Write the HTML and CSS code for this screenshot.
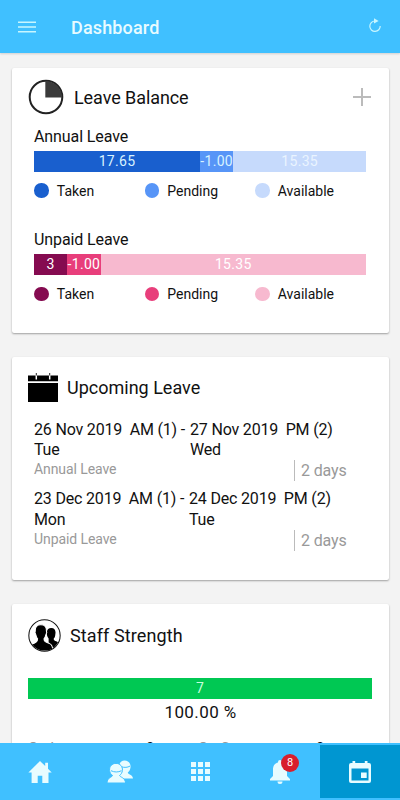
FILE: index.html
```html
<!DOCTYPE html>
<html lang="en">
<head>
<meta charset="utf-8">
<title>Dashboard</title>
<link rel="stylesheet" href="styles.css">
</head>
<body>
<header class="topbar">
  <svg class="menu" viewBox="0 0 18 12"><path d="M0 1.2h18M0 6h18M0 10.8h18"/></svg>
  <h1>Dashboard</h1>
  <svg class="refresh" viewBox="0 0 14 15"><path class="arc" d="M7 3A5.200 5.200 0 1 0 12.200 8"/><path class="tip" d="M6 .2 10.600 3 6 5.600z"/></svg>
</header>
<main>
  <section class="card balance">
    <div class="head">
      <svg class="pie" viewBox="0 0 36 36"><circle cx="18" cy="18" r="16.300"/><path d="M17.300 2v16.600H34A16.300 16.300 0 0 0 17.300 2z"/></svg>
      <h2>Leave Balance</h2>
      <svg class="plus" viewBox="0 0 18 18"><path d="M9 0v18M0 9h18"/></svg>
    </div>
    <div class="group annual">
      <h3>Annual Leave</h3>
      <div class="bar"><span class="c1">17.65</span><span class="c2">-1.00</span><span class="c3">15.35</span></div>
      <ul><li><i class="c1"></i>Taken</li><li><i class="c2"></i>Pending</li><li><i class="c3"></i>Available</li></ul>
    </div>
    <div class="group unpaid">
      <h3>Unpaid Leave</h3>
      <div class="bar"><span class="c1">3</span><span class="c2">-1.00</span><span class="c3">15.35</span></div>
      <ul><li><i class="c1"></i>Taken</li><li><i class="c2"></i>Pending</li><li><i class="c3"></i>Available</li></ul>
    </div>
  </section>
  <section class="card upcoming">
    <div class="head">
      <svg class="cal" viewBox="0 0 30 29"><path d="M0 2.500h30v5.800H0zM0 10h30v19H0z"/><path class="notch" d="M8.300 2v4.500M21.700 2v4.500"/><path class="pin" d="M8.300 0v2.500M21.700 0v2.500"/></svg>
      <h2>Upcoming Leave</h2>
    </div>
    <div class="entry first">
      <div class="from"><p>26 Nov 2019&nbsp; AM (1) -</p><p>Tue</p><small>Annual Leave</small></div>
      <div class="to"><p>27 Nov 2019&nbsp; PM (2)</p><p>Wed</p><span class="days">2 days</span></div>
    </div>
    <div class="entry second">
      <div class="from"><p>23 Dec 2019&nbsp; AM (1) -</p><p>Mon</p><small>Unpaid Leave</small></div>
      <div class="to"><p>24 Dec 2019&nbsp; PM (2)</p><p>Tue</p><span class="days">2 days</span></div>
    </div>
  </section>
  <section class="card staff">
    <div class="head">
      <svg class="people" viewBox="0 0 32 32"><defs><clipPath id="disc"><circle cx="16" cy="16" r="14.600"/></clipPath></defs><g clip-path="url(#disc)"><path d="M22.500 8.800c3 0 4.300 2 4.200 4.600l-.4 3.200c-.3 1.400-1 2.200-1.400 2.600.2 1.800 1.200 2 4.600 3.300V32H20V19c-1.500-2-2-4-1.700-6.500.3-2.400 1.700-3.700 4.200-3.700z"/><path class="front" d="M12.400 5.500c4 0 5.700 2.300 5.400 6l.4 1.600-1 2.500c-.3 1.700-1 2.900-1.700 3.600 0 2.800 1.500 3 5.500 4.700 2.500 1 3.200 3 3.200 8.600H-1v-5.500c2-2 4.600-2.600 7-3.500 2.300-.9 3.300-1.500 3.300-4.300-.8-.8-1.300-2-1.600-3.600l-1-2.500.4-1.600c-.3-3.700 1.500-6 5.300-6z"/></g><circle class="ring" cx="16" cy="16" r="15.200"/></svg>
      <h2>Staff Strength</h2>
    </div>
    <div class="strength">7</div>
    <p class="percent">100.00 %</p>
    <dl><dt>On Leave</dt><dd>0</dd><dt>On Course</dt><dd>0</dd></dl>
  </section>
</main>
<nav>
  <a><svg viewBox="0 0 24 22"><path d="M12 0 .4 11.600h3.200V22h6.100v-7.200h4.600V22h6.200V11.600h3.200L20 7.700V1.800h-2.800v3.300z"/></svg></a>
  <a><svg class="group-icon" viewBox="0 0 26 23"><path d="M17.500.5c4 0 6.500 3.200 6 7-.3 2.300-1.200 4-2.700 5 .1 2.200 4.700 1.600 5.200 6H12V7c.3-4 2-6.500 5.500-6.500z"/><path class="person" d="M9 3.400c4.200 0 6.800 3.200 6.400 7-.2 2.300-1.300 4-2.800 5 .2 2 5.500 1.700 6 7.600H0c.3-5.900 5.200-5.600 5.500-7.600-1.600-1-2.700-2.700-2.900-5-.4-3.800 2.200-7 6.400-7z"/><path class="line" d="M4 10.700c3.500 1.700 7 1.700 10.500 0M14.500 6.800c3 1 6 .7 8.500-.7"/></svg></a>
  <a><svg class="apps" viewBox="0 0 19 19"><path d="M0 0h5v5H0zM7 0h5v5H7zM14 0h5v5h-5zM0 7h5v5H0zM7 7h5v5H7zM14 7h5v5h-5zM0 14h5v5H0zM7 14h5v5H7zM14 14h5v5h-5z"/></svg></a>
  <a><svg class="bell" viewBox="0 0 20 24"><path d="M10 0a2 2 0 0 1 2 2v.5c3.500.8 5 3.700 5 7V16l3 3v1.500H0V19l3-3V9.500c0-3.300 1.500-6.200 5-7V2a2 2 0 0 1 2-2zM7.500 21.500h5a2.500 2.500 0 0 1-5 0z"/></svg><b>8</b></a>
  <a class="active"><svg class="event" viewBox="0 0 22 22"><path fill-rule="evenodd" d="M3.500 0h2.700v2h9.600V0h2.700v2H20a2 2 0 0 1 2 2v16a2 2 0 0 1-2 2H2a2 2 0 0 1-2-2V4a2 2 0 0 1 2-2h1.500zM2.500 7.500v12h17v-12zM12 11.500h5.700V17H12z"/></svg></a>
</nav>
</body>
</html>
```
FILE: styles.css
```css
* { box-sizing: border-box; margin: 0; padding: 0; }
body {
  width: 400px; height: 800px; overflow: hidden;
  display: flex; flex-direction: column;
  background: #f3f3f3; color: #111;
  font-family: Roboto, sans-serif;
}
svg { display: block; flex: none; }
h1, h2, h3 { font-weight: 400; white-space: nowrap; }
.topbar {
  height: 53px; flex: none; display: flex; align-items: center;
  padding: 2px 18px 0; background: #40c0ff;
  box-shadow: 0 1px 2px rgba(0, 0, 0, .15); color: #e8fbff;
}
.menu { width: 18px; height: 12px; margin-bottom: 1px; stroke: #c8f6ff; stroke-width: 1.5; }
.topbar h1 { font-size: 18px; font-weight: 500; margin-left: 35px; line-height: 24px; letter-spacing: .15px; }
.refresh { width: 14px; height: 15px; margin: 0 0 4px auto; }
.arc { fill: none; stroke: #c8f6ff; stroke-width: 1.2; }
.tip { fill: #c8f6ff; }
main { flex: 1; min-height: 0; overflow: hidden; padding: 15px 12px 0; }
.card { background: #fff; border-radius: 2px; box-shadow: 0 1px 2px rgba(0, 0, 0, .35); width: 377px; margin-bottom: 24px; }
.head { display: flex; align-items: center; padding: 0 16px; }
.head h2 { font-size: 18px; line-height: 24px; }
.balance { height: 265px; padding-top: 11px; }
.balance .head { height: 36px; padding-right: 18px; }
.pie { width: 36px; height: 36px; }
.pie circle { fill: none; stroke: #222; stroke-width: 2; }
.pie path { fill: #3a3a3a; }
.balance h2 { margin-left: 10px; letter-spacing: -.08px; padding-top: 1px; }
.plus { width: 18px; height: 18px; margin-left: auto; stroke: #bbb; stroke-width: 2; }
.group { padding: 0 22px; height: 103.5px; }
.group h3 { font-size: 16px; line-height: 20px; padding-top: 12px; height: 35.7px; letter-spacing: -.1px; }
.unpaid h3 { padding-top: 11.5px; }
.bar { width: 332px; height: 21px; display: flex; color: #fff; font-size: 14px; line-height: 21px; letter-spacing: .3px; text-align: center; }
.annual .bar { color: #d8f2ff; }
.annual .bar span:nth-child(1) { width: 166px; }
.bar span:nth-child(1), .bar span:nth-child(2) { width: 33.3px; }
.bar span:nth-child(3) { flex: 1; }
.bar span { white-space: nowrap; }
.group ul { display: flex; list-style: none; padding-top: 10px; }
.group li { width: 110.5px; display: flex; align-items: center; height: 18px; font-size: 14px; }
.group i { width: 14.5px; height: 14.5px; border-radius: 50%; margin-right: 8.3px; }
.annual .c1 { background: #195fce; }
.annual .c2 { background: #5795f7; }
.annual .c3 { background: #c6dafc; }
.annual .bar .c3 { color: #eaf4ff; }
.unpaid .c1 { background: #850b50; }
.unpaid .c2 { background: #e83e7b; }
.unpaid .c3 { background: #f7b9cf; }
.upcoming { height: 223px; padding-top: 16px; }
.cal { width: 30px; height: 29px; }
.cal .notch { stroke: #fff; stroke-width: 1.5; }
.cal .pin { stroke: #222; stroke-width: 1; }
.upcoming h2 { margin-left: 9px; padding-top: 1px; }
.entry { display: flex; padding-left: 22px; height: 69.5px; font-size: 16px; }
.entry.first { margin-top: 17.5px; }
.entry p { line-height: 20.8px; white-space: nowrap; letter-spacing: -.18px; }
.from { width: 156px; }
.second .from { width: 155px; }
.entry small { display: block; font-size: 14px; line-height: 17px; color: #999; letter-spacing: -.08px; }
.to { width: 180px; }
.days { display: block; width: 80px; margin: -1px 0 0 104px; height: 21px; padding-left: 6px; border-left: 1px solid #bbb; font-size: 16px; line-height: 22px; color: #999; letter-spacing: -.15px; }
.second .days { margin-left: 105px; }
.staff { height: 260px; padding-top: 15px; }
.people { width: 33px; height: 33px; }
.people .front { stroke: #fff; stroke-width: 1; }
.people .ring { fill: none; stroke: #111; stroke-width: 1; }
.staff h2 { margin-left: 9px; letter-spacing: .1px; padding-top: 1px; }
.strength { margin: 26px 17px 0 16px; height: 21px; background: #00c853; color: #c8ffdc; text-align: center; font-size: 14px; line-height: 21px; }
.percent { font-size: 17px; line-height: 26px; text-align: center; letter-spacing: .4px; }
dl { display: flex; margin: 13px 16px 0; font-size: 15px; line-height: 20px; }
dt { width: 118px; color: #999; }
dd { width: 52px; }
nav { height: 57px; flex: none; display: flex; background: #40c0ff; padding: 2px 0; position: relative; }
nav a { width: 80px; display: flex; justify-content: center; align-items: center; position: relative; }
nav svg { width: 24px; height: 22px; fill: #e8fcff; }
nav .group-icon { width: 26px; height: 23px; }
.person { stroke: #40c0ff; stroke-width: 1; }
.line { fill: none; stroke: #40c0ff; stroke-width: 1; }
nav .apps { width: 19px; height: 19px; }
nav .bell { width: 20px; height: 24px; }
nav b { position: absolute; left: 41px; top: 9px; width: 18px; height: 18px; border-radius: 50%; background: #d81e2c; color: #fff; font-size: 11px; font-weight: 400; line-height: 18px; text-align: center; }
nav .active { background: #0096d1; }
nav .event { width: 22px; height: 22px; }
```
